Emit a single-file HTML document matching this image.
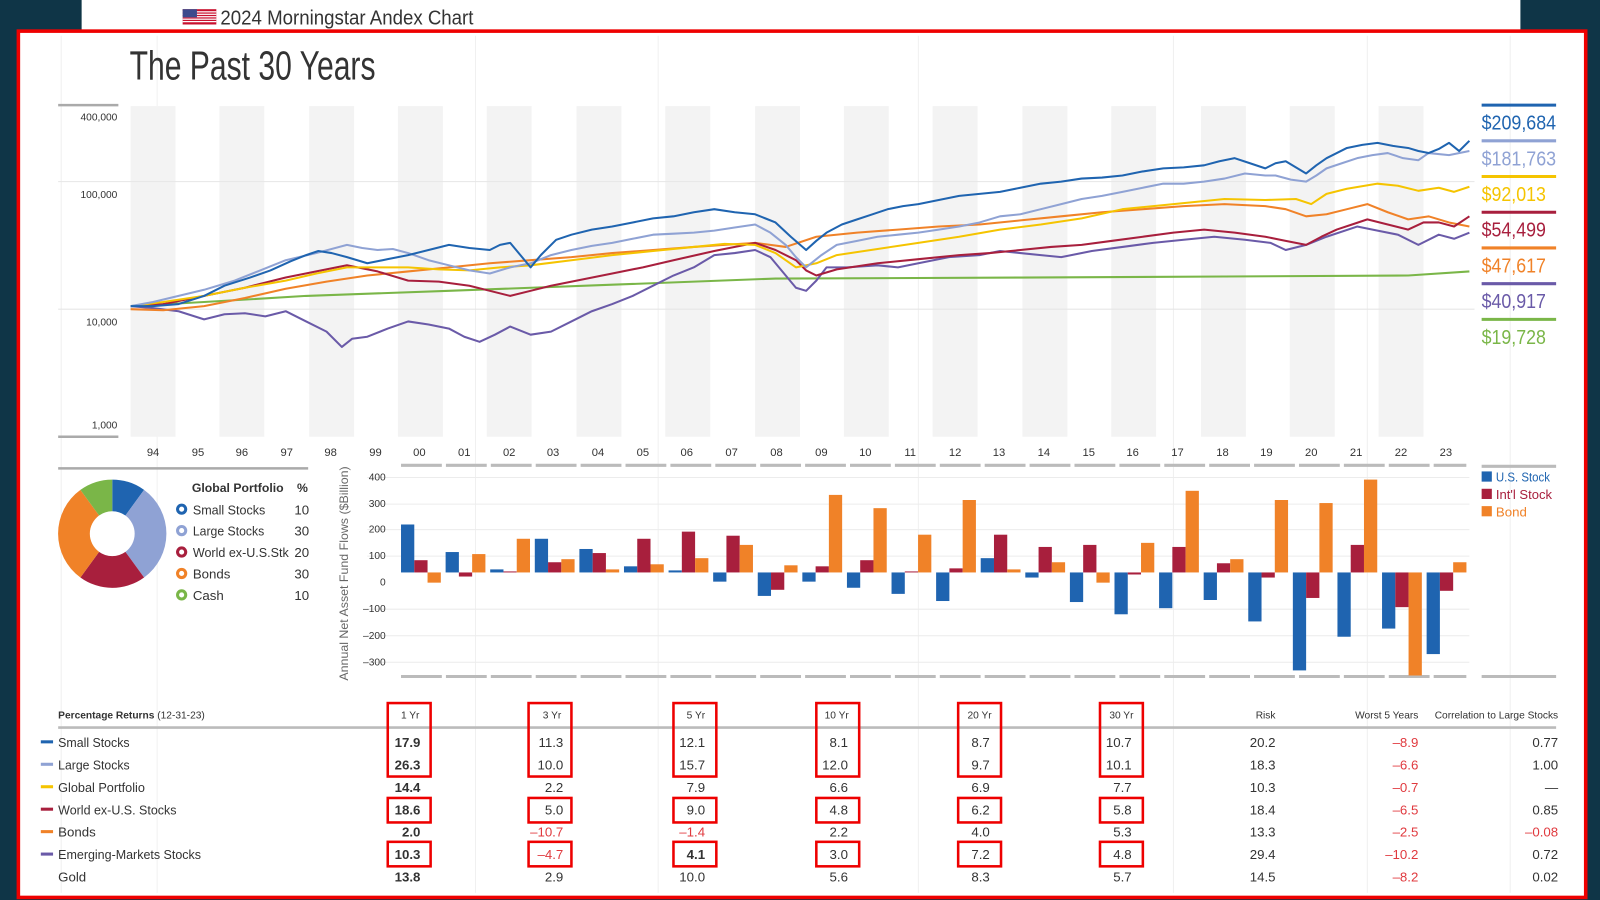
<!DOCTYPE html>
<html><head><meta charset="utf-8"><style>
html,body{margin:0;padding:0;background:#0f3547;width:1600px;height:900px;overflow:hidden}
svg{display:block}
text{font-family:"Liberation Sans",sans-serif}
</style></head><body>
<svg width="1600" height="900" viewBox="0 0 1568 882" preserveAspectRatio="none" xmlns="http://www.w3.org/2000/svg">
<rect x="0" y="0" width="1568" height="882" fill="#0f3547"/>
<rect x="80" y="0" width="1410" height="32" fill="#fff"/>
<!-- flag -->
<g>
<rect x="179" y="9" width="33" height="15" fill="#c8102e"/>
<rect x="179" y="11" width="33" height="1.2" fill="#fff"/><rect x="179" y="13.4" width="33" height="1.2" fill="#fff"/><rect x="179" y="15.8" width="33" height="1.2" fill="#fff"/><rect x="179" y="18.2" width="33" height="1.2" fill="#fff"/><rect x="179" y="20.6" width="33" height="1.2" fill="#fff"/>
<rect x="179" y="9" width="14" height="8" fill="#3c4a8c"/>
</g>
<text x="216" y="24" font-size="20" fill="#333" textLength="248" lengthAdjust="spacingAndGlyphs">2024 Morningstar Andex Chart</text>
<rect x="18" y="30.5" width="1536" height="849" fill="#fff" stroke="#ee0000" stroke-width="3.5"/>
<!-- faint vertical grid -->
<g stroke="#f0f0f0" stroke-width="1">
<line x1="60" y1="35" x2="60" y2="875"/><line x1="154" y1="35" x2="154" y2="875"/><line x1="466" y1="35" x2="466" y2="875"/><line x1="645" y1="35" x2="645" y2="875"/><line x1="900" y1="35" x2="900" y2="875"/><line x1="1150" y1="35" x2="1150" y2="875"/><line x1="1340" y1="35" x2="1340" y2="875"/><line x1="1480" y1="35" x2="1480" y2="875"/>
</g>
<text x="127" y="78" font-size="40" fill="#333" textLength="241" lengthAdjust="spacingAndGlyphs">The Past 30 Years</text>
<!-- main chart bands -->
<g fill="#f3f3f3">
<rect x="128" y="104" width="44" height="324"/><rect x="215" y="104" width="44" height="324"/><rect x="303" y="104" width="44" height="324"/><rect x="390" y="104" width="44" height="324"/><rect x="477" y="104" width="44" height="324"/><rect x="565" y="104" width="44" height="324"/><rect x="652" y="104" width="44" height="324"/><rect x="740" y="104" width="44" height="324"/><rect x="827" y="104" width="44" height="324"/><rect x="914" y="104" width="44" height="324"/><rect x="1002" y="104" width="44" height="324"/><rect x="1089" y="104" width="44" height="324"/><rect x="1177" y="104" width="44" height="324"/><rect x="1264" y="104" width="44" height="324"/><rect x="1351" y="104" width="44" height="324"/>
</g>
<g stroke="#e6e6e6" stroke-width="1"><line x1="57" y1="178" x2="1445" y2="178"/><line x1="57" y1="303" x2="1445" y2="303"/></g>
<line x1="57" y1="103" x2="116" y2="103" stroke="#aaa" stroke-width="2.5"/>
<line x1="57" y1="428" x2="116" y2="428" stroke="#aaa" stroke-width="2.5"/>
<g font-size="10" fill="#333" text-anchor="end"><text x="115" y="118">400,000</text><text x="115" y="194">100,000</text><text x="115" y="319">10,000</text><text x="115" y="420">1,000</text></g>
<g font-size="11" fill="#333" text-anchor="middle">
<text x="150" y="447">94</text><text x="194" y="447">95</text><text x="237" y="447">96</text><text x="281" y="447">97</text><text x="324" y="447">98</text><text x="368" y="447">99</text><text x="411" y="447">00</text><text x="455" y="447">01</text><text x="499" y="447">02</text><text x="542" y="447">03</text><text x="586" y="447">04</text><text x="630" y="447">05</text><text x="673" y="447">06</text><text x="717" y="447">07</text><text x="761" y="447">08</text><text x="805" y="447">09</text><text x="848" y="447">10</text><text x="892" y="447">11</text><text x="936" y="447">12</text><text x="979" y="447">13</text><text x="1023" y="447">14</text><text x="1067" y="447">15</text><text x="1110" y="447">16</text><text x="1154" y="447">17</text><text x="1198" y="447">18</text><text x="1241" y="447">19</text><text x="1285" y="447">20</text><text x="1329" y="447">21</text><text x="1373" y="447">22</text><text x="1417" y="447">23</text>
</g>
<!-- lines -->
<g fill="none" stroke-width="2" stroke-linejoin="round">
<polyline stroke="#7ab648" points="128,300 200,296 300,290 440,285 600,279 760,273 1000,272 1200,271 1380,270 1440,266"/>
<polyline stroke="#6a5aa8" points="128,300 150,302 175,305 200,313 220,308 240,307 260,310 280,305 300,315 320,325 335,340 345,332 360,330 380,322 400,315 420,318 440,322 455,330 470,335 485,328 500,320 520,328 540,325 560,315 580,305 600,298 620,290 640,280 660,270 680,262 700,250 720,248 740,245 755,252 770,270 780,282 790,285 800,275 810,262 830,262 860,260 880,262 900,258 930,252 960,250 980,246 1000,248 1020,250 1040,252 1070,246 1100,242 1130,238 1160,235 1190,232 1220,235 1245,238 1260,245 1280,240 1300,232 1330,222 1350,226 1370,230 1390,240 1410,230 1425,234 1440,228"/>
<polyline stroke="#f08228" points="128,303 160,304 200,300 240,292 280,283 320,276 360,270 400,266 440,262 480,258 520,255 560,252 600,248 640,245 680,242 710,240 740,238 770,242 800,232 840,228 880,225 920,222 960,220 1000,216 1040,212 1080,208 1120,205 1160,202 1200,200 1240,202 1260,205 1280,212 1300,210 1320,205 1340,200 1360,208 1380,215 1400,212 1420,218 1440,222"/>
<polyline stroke="#a81f3d" points="128,300 160,298 200,290 240,282 280,272 310,266 340,260 370,266 400,275 430,276 460,280 480,285 500,290 520,285 540,280 570,274 600,268 630,262 660,255 700,246 740,238 760,245 780,255 790,265 800,270 820,264 860,258 900,254 940,250 970,248 1000,245 1030,242 1060,240 1090,236 1120,232 1150,228 1180,225 1210,228 1240,232 1260,236 1280,240 1295,232 1310,225 1325,220 1340,215 1360,220 1380,225 1395,218 1410,218 1425,222 1440,212"/>
<polyline stroke="#f5c400" points="128,300 160,296 200,290 240,282 280,275 310,268 340,262 370,262 400,262 430,264 460,265 490,262 520,260 560,255 600,250 640,246 680,242 710,239 740,240 760,248 780,262 800,258 820,250 860,244 900,238 940,232 980,225 1020,220 1060,214 1100,205 1150,200 1200,195 1240,196 1270,195 1285,200 1300,190 1320,185 1350,180 1370,182 1390,187 1410,184 1425,188 1440,183"/>
<polyline stroke="#8fa2d4" points="128,300 150,296 175,290 200,284 230,275 255,265 280,255 310,248 340,240 355,243 370,245 385,244 400,248 420,255 440,260 460,265 480,268 500,262 520,258 540,250 560,245 580,241 600,238 620,234 640,230 660,229 680,228 700,226 720,223 740,220 755,228 770,240 780,252 790,262 805,250 820,240 840,236 860,232 880,230 900,228 920,225 940,222 960,218 980,212 1000,210 1020,205 1040,200 1060,195 1080,192 1100,188 1120,184 1140,180 1160,180 1180,178 1200,175 1220,170 1240,172 1250,172 1265,176 1280,178 1290,172 1300,165 1315,160 1330,155 1345,152 1360,150 1375,155 1390,157 1400,150 1420,152 1440,148"/>
<polyline stroke="#1f64b0" points="128,300 150,300 175,298 200,290 220,280 245,272 265,265 285,256 300,250 312,246 325,248 340,252 360,258 380,254 400,250 420,245 440,240 460,243 480,245 490,240 500,238 510,250 520,262 530,250 545,235 560,230 580,225 600,222 620,218 640,214 660,212 680,208 700,205 720,208 740,210 750,214 760,218 775,232 790,245 800,236 810,228 825,220 840,215 855,210 870,205 885,202 900,200 920,196 940,192 960,190 980,188 1000,184 1020,180 1040,178 1060,175 1080,174 1100,172 1120,168 1140,165 1160,164 1180,162 1195,158 1210,155 1225,160 1240,165 1250,160 1260,158 1270,164 1280,170 1290,162 1300,155 1310,150 1320,145 1335,142 1350,140 1365,143 1380,145 1390,148 1400,150 1410,146 1420,140 1430,148 1440,138"/>
</g>
<!-- right legend -->
<g stroke-width="3">
<line x1="1452" y1="103" x2="1525" y2="103" stroke="#1f64b0"/><line x1="1452" y1="138" x2="1525" y2="138" stroke="#8fa2d4"/><line x1="1452" y1="173" x2="1525" y2="173" stroke="#f5c400"/><line x1="1452" y1="208" x2="1525" y2="208" stroke="#a81f3d"/><line x1="1452" y1="243" x2="1525" y2="243" stroke="#f08228"/><line x1="1452" y1="278" x2="1525" y2="278" stroke="#6a5aa8"/><line x1="1452" y1="313" x2="1525" y2="313" stroke="#7ab648"/>
</g>
<g font-size="20" lengthAdjust="spacingAndGlyphs">
<text x="1452" y="127" fill="#1f64b0" textLength="73" lengthAdjust="spacingAndGlyphs">$209,684</text>
<text x="1452" y="162" fill="#8fa2d4" textLength="73" lengthAdjust="spacingAndGlyphs">$181,763</text>
<text x="1452" y="197" fill="#f5c400" textLength="63" lengthAdjust="spacingAndGlyphs">$92,013</text>
<text x="1452" y="232" fill="#a81f3d" textLength="63" lengthAdjust="spacingAndGlyphs">$54,499</text>
<text x="1452" y="267" fill="#f08228" textLength="63" lengthAdjust="spacingAndGlyphs">$47,617</text>
<text x="1452" y="302" fill="#6a5aa8" textLength="63" lengthAdjust="spacingAndGlyphs">$40,917</text>
<text x="1452" y="337" fill="#7ab648" textLength="63" lengthAdjust="spacingAndGlyphs">$19,728</text>
</g>
<!-- pie -->
<line x1="57" y1="459" x2="302" y2="459" stroke="#aaa" stroke-width="2.5"/>
<g transform="translate(110,523)">
<path d="M0,-53 A53,53 0 0 1 31.2,-42.9 L12.9,-17.8 A22,22 0 0 0 0,-22Z" fill="#1f64b0"/>
<path d="M31.2,-42.9 A53,53 0 0 1 31.2,42.9 L12.9,17.8 A22,22 0 0 0 12.9,-17.8Z" fill="#8fa2d4"/>
<path d="M31.2,42.9 A53,53 0 0 1 -31.2,42.9 L-12.9,17.8 A22,22 0 0 0 12.9,17.8Z" fill="#a81f3d"/>
<path d="M-31.2,42.9 A53,53 0 0 1 -31.2,-42.9 L-12.9,-17.8 A22,22 0 0 0 -12.9,17.8Z" fill="#f08228"/>
<path d="M-31.2,-42.9 A53,53 0 0 1 0,-53 L0,-22 A22,22 0 0 0 -12.9,-17.8Z" fill="#7ab648"/>
</g>
<text x="188" y="482" font-size="12" font-weight="bold" fill="#333" textLength="90" lengthAdjust="spacingAndGlyphs">Global Portfolio</text>
<text x="291" y="482" font-size="12" font-weight="bold" fill="#333">%</text>
<g fill="none" stroke-width="3"><circle cx="178" cy="499" r="4" stroke="#1f64b0"/><circle cx="178" cy="520" r="4" stroke="#8fa2d4"/><circle cx="178" cy="541" r="4" stroke="#a81f3d"/><circle cx="178" cy="562" r="4" stroke="#f08228"/><circle cx="178" cy="583" r="4" stroke="#7ab648"/></g>
<g font-size="13" fill="#333">
<text x="189" y="504" textLength="71" lengthAdjust="spacingAndGlyphs">Small Stocks</text>
<text x="189" y="525" textLength="70" lengthAdjust="spacingAndGlyphs">Large Stocks</text>
<text x="189" y="546" textLength="94" lengthAdjust="spacingAndGlyphs">World ex-U.S.Stk</text>
<text x="189" y="567">Bonds</text>
<text x="189" y="588">Cash</text>
</g>
<g font-size="13" fill="#333" text-anchor="end"><text x="303" y="504">10</text><text x="303" y="525">30</text><text x="303" y="546">20</text><text x="303" y="567">30</text><text x="303" y="588">10</text></g>
<!-- bar chart -->
<text transform="translate(341,562) rotate(-90)" font-size="12" fill="#666" text-anchor="middle" textLength="210" lengthAdjust="spacingAndGlyphs">Annual Net Asset Fund Flows ($Billion)</text>
<g stroke="#ececec"><line x1="360" y1="468" x2="1440" y2="468"/><line x1="360" y1="494" x2="1440" y2="494"/><line x1="360" y1="519" x2="1440" y2="519"/><line x1="360" y1="545" x2="1440" y2="545"/><line x1="360" y1="597" x2="1440" y2="597"/><line x1="360" y1="623" x2="1440" y2="623"/><line x1="360" y1="649" x2="1440" y2="649"/></g>
<g font-size="10" fill="#333" text-anchor="end"><text x="378" y="471">400</text><text x="378" y="497">300</text><text x="378" y="522">200</text><text x="378" y="548">100</text><text x="378" y="574">0</text><text x="378" y="600">–100</text><text x="378" y="626">–200</text><text x="378" y="652">–300</text></g>
<g stroke="#bbb" stroke-width="3">
<line x1="393" y1="456" x2="1437" y2="456" stroke-dasharray="40 4"/>
<line x1="393" y1="663" x2="1437" y2="663" stroke-dasharray="40 4"/>
<line x1="1452" y1="457" x2="1525" y2="457"/><line x1="1452" y1="663" x2="1525" y2="663"/>
</g>
<g fill="#1f64b0">
<rect x="393" y="514" width="13" height="47"/><rect x="436.7" y="541" width="13" height="20"/><rect x="480.4" y="558" width="13" height="3"/><rect x="524.1" y="528" width="13" height="33"/><rect x="567.8" y="538" width="13" height="23"/><rect x="611.5" y="555" width="13" height="6"/><rect x="655.2" y="559" width="13" height="2"/><rect x="698.9" y="561" width="13" height="9"/><rect x="742.6" y="561" width="13" height="23"/><rect x="786.3" y="561" width="13" height="9"/><rect x="830" y="561" width="13" height="15"/><rect x="873.7" y="561" width="13" height="21"/><rect x="917.4" y="561" width="13" height="28"/><rect x="961.1" y="547" width="13" height="14"/><rect x="1004.8" y="561" width="13" height="5"/><rect x="1048.5" y="561" width="13" height="29"/><rect x="1092.2" y="561" width="13" height="41"/><rect x="1135.9" y="561" width="13" height="35"/><rect x="1179.6" y="561" width="13" height="27"/><rect x="1223.3" y="561" width="13" height="48"/><rect x="1267" y="561" width="13" height="96"/><rect x="1310.7" y="561" width="13" height="63"/><rect x="1354.4" y="561" width="13" height="55"/><rect x="1398.1" y="561" width="13" height="80"/>
</g>
<g fill="#a81f3d">
<rect x="406" y="549" width="13" height="12"/><rect x="449.7" y="561" width="13" height="4"/><rect x="493.4" y="560" width="13" height="1"/><rect x="537.1" y="551" width="13" height="10"/><rect x="580.8" y="542" width="13" height="19"/><rect x="624.5" y="528" width="13" height="33"/><rect x="668.2" y="521" width="13" height="40"/><rect x="711.9" y="525" width="13" height="36"/><rect x="755.6" y="561" width="13" height="17"/><rect x="799.3" y="555" width="13" height="6"/><rect x="843" y="549" width="13" height="12"/><rect x="886.7" y="560" width="13" height="1"/><rect x="930.4" y="557" width="13" height="4"/><rect x="974.1" y="524" width="13" height="37"/><rect x="1017.8" y="536" width="13" height="25"/><rect x="1061.5" y="534" width="13" height="27"/><rect x="1105.2" y="561" width="13" height="2"/><rect x="1148.9" y="536" width="13" height="25"/><rect x="1192.6" y="552" width="13" height="9"/><rect x="1236.3" y="561" width="13" height="5"/><rect x="1280" y="561" width="13" height="25"/><rect x="1323.7" y="534" width="13" height="27"/><rect x="1367.4" y="561" width="13" height="34"/><rect x="1411.1" y="561" width="13" height="18"/>
</g>
<g fill="#f08228">
<rect x="419" y="561" width="13" height="10"/><rect x="462.7" y="543" width="13" height="18"/><rect x="506.4" y="528" width="13" height="33"/><rect x="550.1" y="548" width="13" height="13"/><rect x="593.8" y="558" width="13" height="3"/><rect x="637.5" y="553" width="13" height="8"/><rect x="681.2" y="547" width="13" height="14"/><rect x="724.9" y="534" width="13" height="27"/><rect x="768.6" y="554" width="13" height="7"/><rect x="812.3" y="485" width="13" height="76"/><rect x="856" y="498" width="13" height="63"/><rect x="899.7" y="524" width="13" height="37"/><rect x="943.4" y="490" width="13" height="71"/><rect x="987.1" y="558" width="13" height="3"/><rect x="1030.8" y="551" width="13" height="10"/><rect x="1074.5" y="561" width="13" height="10"/><rect x="1118.2" y="532" width="13" height="29"/><rect x="1161.9" y="481" width="13" height="80"/><rect x="1205.6" y="548" width="13" height="13"/><rect x="1249.3" y="490" width="13" height="71"/><rect x="1293" y="493" width="13" height="68"/><rect x="1336.7" y="470" width="13" height="91"/><rect x="1380.4" y="561" width="13" height="101"/><rect x="1424.1" y="551" width="13" height="10"/>
</g>
<rect x="1452" y="462" width="10" height="10" fill="#1f64b0"/><rect x="1452" y="479" width="10" height="10" fill="#a81f3d"/><rect x="1452" y="496" width="10" height="10" fill="#f08228"/>
<g font-size="13"><text x="1466" y="472" fill="#1f64b0" textLength="53" lengthAdjust="spacingAndGlyphs">U.S. Stock</text><text x="1466" y="489" fill="#a81f3d" textLength="55" lengthAdjust="spacingAndGlyphs">Int'l Stock</text><text x="1466" y="506" fill="#f08228">Bond</text></g>
<!-- table -->
<text x="57" y="704" font-size="10" fill="#333"><tspan font-weight="bold">Percentage Returns</tspan> (12-31-23)</text>
<line x1="57" y1="713" x2="1525" y2="713" stroke="#bbb" stroke-width="2.5"/>
<g font-size="10" fill="#333" text-anchor="middle"><text x="402" y="704">1 Yr</text><text x="541" y="704">3 Yr</text><text x="682" y="704">5 Yr</text><text x="820" y="704">10 Yr</text><text x="960" y="704">20 Yr</text><text x="1099" y="704">30 Yr</text></g>
<g font-size="10" fill="#333" text-anchor="end"><text x="1250" y="704">Risk</text><text x="1390" y="704">Worst 5 Years</text><text x="1527" y="704">Correlation to Large Stocks</text></g>
<g stroke-width="3"><line x1="40" y1="727" x2="52" y2="727" stroke="#1f64b0"/><line x1="40" y1="749" x2="52" y2="749" stroke="#8fa2d4"/><line x1="40" y1="771" x2="52" y2="771" stroke="#f5c400"/><line x1="40" y1="793" x2="52" y2="793" stroke="#a81f3d"/><line x1="40" y1="815" x2="52" y2="815" stroke="#f08228"/><line x1="40" y1="837" x2="52" y2="837" stroke="#6a5aa8"/></g>
<g font-size="13" fill="#333">
<text x="57" y="732" textLength="70" lengthAdjust="spacingAndGlyphs">Small Stocks</text>
<text x="57" y="754" textLength="70" lengthAdjust="spacingAndGlyphs">Large Stocks</text>
<text x="57" y="776" textLength="85" lengthAdjust="spacingAndGlyphs">Global Portfolio</text>
<text x="57" y="798" textLength="116" lengthAdjust="spacingAndGlyphs">World ex-U.S. Stocks</text>
<text x="57" y="820">Bonds</text>
<text x="57" y="842" textLength="140" lengthAdjust="spacingAndGlyphs">Emerging-Markets Stocks</text>
<text x="57" y="864">Gold</text>
</g>
<g font-size="13" fill="#333" text-anchor="end">
<g font-weight="bold"><text x="412" y="732">17.9</text><text x="412" y="754">26.3</text><text x="412" y="776">14.4</text><text x="412" y="798">18.6</text><text x="412" y="820">2.0</text><text x="412" y="842">10.3</text><text x="412" y="864">13.8</text></g>
<text x="552" y="732">11.3</text><text x="552" y="754">10.0</text><text x="552" y="776">2.2</text><text x="552" y="798">5.0</text><text x="552" y="820" fill="#e0393e">–10.7</text><text x="552" y="842" fill="#e0393e">–4.7</text><text x="552" y="864">2.9</text>
<text x="691" y="732">12.1</text><text x="691" y="754">15.7</text><text x="691" y="776">7.9</text><text x="691" y="798">9.0</text><text x="691" y="820" fill="#e0393e">–1.4</text><text x="691" y="842" font-weight="bold">4.1</text><text x="691" y="864">10.0</text>
<text x="831" y="732">8.1</text><text x="831" y="754">12.0</text><text x="831" y="776">6.6</text><text x="831" y="798">4.8</text><text x="831" y="820">2.2</text><text x="831" y="842">3.0</text><text x="831" y="864">5.6</text>
<text x="970" y="732">8.7</text><text x="970" y="754">9.7</text><text x="970" y="776">6.9</text><text x="970" y="798">6.2</text><text x="970" y="820">4.0</text><text x="970" y="842">7.2</text><text x="970" y="864">8.3</text>
<text x="1109" y="732">10.7</text><text x="1109" y="754">10.1</text><text x="1109" y="776">7.7</text><text x="1109" y="798">5.8</text><text x="1109" y="820">5.3</text><text x="1109" y="842">4.8</text><text x="1109" y="864">5.7</text>
<text x="1250" y="732">20.2</text><text x="1250" y="754">18.3</text><text x="1250" y="776">10.3</text><text x="1250" y="798">18.4</text><text x="1250" y="820">13.3</text><text x="1250" y="842">29.4</text><text x="1250" y="864">14.5</text>
<g fill="#e0393e"><text x="1390" y="732">–8.9</text><text x="1390" y="754">–6.6</text><text x="1390" y="776">–0.7</text><text x="1390" y="798">–6.5</text><text x="1390" y="820">–2.5</text><text x="1390" y="842">–10.2</text><text x="1390" y="864">–8.2</text></g>
<text x="1527" y="732">0.77</text><text x="1527" y="754">1.00</text><text x="1527" y="776">—</text><text x="1527" y="798">0.85</text><text x="1527" y="820" fill="#e0393e">–0.08</text><text x="1527" y="842">0.72</text><text x="1527" y="864">0.02</text>
</g>
<!-- red boxes -->
<g fill="none" stroke="#ee0000" stroke-width="2.5">
<rect x="380" y="689" width="42" height="72"/><rect x="380" y="782" width="42" height="24"/><rect x="380" y="825" width="42" height="24"/>
<rect x="518" y="689" width="42" height="72"/><rect x="518" y="782" width="42" height="24"/><rect x="518" y="825" width="42" height="24"/>
<rect x="660" y="689" width="42" height="72"/><rect x="660" y="782" width="42" height="24"/><rect x="660" y="825" width="42" height="24"/>
<rect x="800" y="689" width="42" height="72"/><rect x="800" y="782" width="42" height="24"/><rect x="800" y="825" width="42" height="24"/>
<rect x="939" y="689" width="42" height="72"/><rect x="939" y="782" width="42" height="24"/><rect x="939" y="825" width="42" height="24"/>
<rect x="1078" y="689" width="42" height="72"/><rect x="1078" y="782" width="42" height="24"/><rect x="1078" y="825" width="42" height="24"/>
</g>
</svg>
</body></html>
